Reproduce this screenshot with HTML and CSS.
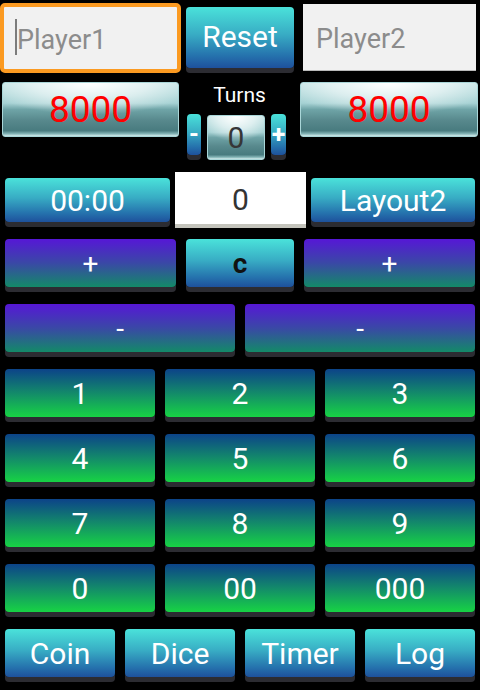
FILE: index.html
```html
<!DOCTYPE html>
<html>
<head>
<meta charset="utf-8">
<link rel="stylesheet" href="styles.css">
</head>
<body>
<div class="app">
  <div class="row1">
    <div class="field focused"><span class="caret"></span><span class="ph">Player1</span></div>
    <div class="btn teal reset">Reset</div>
    <div class="field p2"><span class="ph">Player2</span></div>
  </div>
  <div class="row2">
    <div class="score left">8000</div>
    <div class="center">
      <div class="turns">Turns</div>
      <div class="controls">
        <div class="btn teal mini">-</div>
        <div class="counter">0</div>
        <div class="btn teal mini plus">+</div>
      </div>
    </div>
    <div class="score right">8000</div>
  </div>
  <div class="row3">
    <div class="btn teal timebtn">00:00</div>
    <div class="entry">0</div>
    <div class="btn teal layoutbtn">Layout2</div>
  </div>
  <div class="grid row-ops">
    <div class="btn purple op">+</div>
    <div class="btn teal clear">c</div>
    <div class="btn purple op">+</div>
  </div>
  <div class="grid row-minus">
    <div class="btn purple sign">-</div>
    <div class="btn purple sign">-</div>
  </div>
  <div class="grid row-num">
    <div class="btn green">1</div>
    <div class="btn green">2</div>
    <div class="btn green">3</div>
  </div>
  <div class="grid row-num">
    <div class="btn green">4</div>
    <div class="btn green">5</div>
    <div class="btn green">6</div>
  </div>
  <div class="grid row-num">
    <div class="btn green">7</div>
    <div class="btn green">8</div>
    <div class="btn green">9</div>
  </div>
  <div class="grid row-num">
    <div class="btn green">0</div>
    <div class="btn green">00</div>
    <div class="btn green">000</div>
  </div>
  <div class="grid row-tools">
    <div class="btn teal">Coin</div>
    <div class="btn teal">Dice</div>
    <div class="btn teal">Timer</div>
    <div class="btn teal">Log</div>
  </div>
</div>
</body>
</html>
```

FILE: styles.css
```css
html, body {
  margin: 0;
  padding: 0;
  background: #000;
}
body {
  width: 480px;
  height: 690px;
  overflow: hidden;
  font-family: Roboto, "Noto Sans", "Liberation Sans", sans-serif;
  color: #fff;
}
.app {
  display: flex;
  flex-direction: column;
}

/* generic button */
.btn {
  display: flex;
  align-items: center;
  justify-content: center;
  border-radius: 4px;
  box-shadow: 0 5px 0 #2c2c32;
  color: #fff;
  font-size: 30px;
  box-sizing: border-box;
}
.teal {
  background: linear-gradient(to bottom, #4ae2da 0%, #38acc4 45%, #2572ad 80%, #1e519c 100%);
}
.purple {
  background: linear-gradient(to bottom, #5617d6 0%, #3a48a6 50%, #138a68 100%);
}
.green {
  background: linear-gradient(to bottom, #0c4389 0%, #138a6a 50%, #17d344 100%);
}

/* row 1 */
.row1 {
  display: flex;
  align-items: flex-start;
  height: 70px;
  margin-top: 3px;
}
.field {
  position: relative;
  display: flex;
  align-items: center;
  box-sizing: border-box;
  background: #f1f1f1;
  padding-left: 13px;
}
.field.focused {
  width: 181px;
  height: 70px;
  border: 4px solid #fb9a21;
  border-radius: 5px;
  padding-top: 3px;
}
.field.p2 {
  margin-left: 9px;
  width: 173px;
  height: 67px;
  margin-top: 1px;
  border-bottom: 1px solid #b9b9b9;
  padding-top: 4px;
}
.ph {
  font-size: 27px;
  color: #8c8c8c;
}
.caret {
  position: absolute;
  left: 11px;
  top: 12px;
  width: 2px;
  height: 36px;
  background: #7c7c7c;
}
.reset {
  margin-left: 5px;
  margin-top: 4px;
  width: 108px;
  height: 61px;
  padding-bottom: 2px;
}

/* row 2 */
.row2 {
  display: flex;
  align-items: flex-start;
  margin-top: 9px;
  height: 78px;
}
.score, .counter {
  display: flex;
  align-items: center;
  justify-content: center;
  box-sizing: border-box;
  border: 1px solid #a9d6d8;
  border-radius: 3px;
  background:
    radial-gradient(ellipse 62% 60% at 50% 0%, rgba(255,255,255,1) 0%, rgba(255,255,255,0.55) 55%, rgba(255,255,255,0) 100%),
    linear-gradient(to bottom, #bfe2e3 0%, #a6d2d4 38%, #6fa4a7 50%, #58898d 70%, #487b7f 90%, #86b6b8 96%, #d2ebeb 100%);
}
.score {
  height: 55px;
  color: #ff0000;
  font-size: 37px;
}
.score.left {
  margin-left: 2px;
  width: 177px;
}
.score.right {
  width: 178px;
}
.center {
  width: 121px;
  display: flex;
  flex-direction: column;
}
.turns {
  margin-top: 3px;
  height: 20px;
  line-height: 20px;
  font-size: 21px;
  text-align: center;
  color: #fff;
}
.controls {
  display: flex;
  align-items: flex-start;
  margin-top: 9px;
  margin-left: 8px;
}
.mini {
  width: 14px;
  height: 41px;
  font-size: 25px;
  font-weight: bold;
  border-radius: 4px;
}
.mini.plus {
  width: 15px;
  margin-left: 6px;
}
.counter {
  margin-left: 6px;
  margin-top: 1px;
  width: 58px;
  height: 45px;
  font-size: 30px;
  color: #363636;
}

/* row 3 */
.row3 {
  display: flex;
  align-items: center;
  height: 56px;
  margin-top: 12px;
  padding-left: 5px;
}
.timebtn {
  width: 165px;
  height: 44px;
}
.entry {
  margin-left: 5px;
  width: 131px;
  height: 56px;
  box-sizing: border-box;
  background: #fff;
  border-bottom: 4px solid #c4c4bc;
  display: flex;
  align-items: center;
  justify-content: center;
  font-size: 30px;
  color: #333;
  padding-top: 2px;
}
.layoutbtn {
  margin-left: 5px;
  width: 164px;
  height: 44px;
}

/* button grids */
.grid {
  display: grid;
  column-gap: 10px;
  padding: 0 5px;
  height: 48px;
  margin-top: 17px;
}
.grid .btn {
  height: 48px;
}
.row-ops {
  margin-top: 11px;
  grid-template-columns: 171px 108px 171px;
}
.row-minus {
  grid-template-columns: 230px 230px;
}
.row-num {
  grid-template-columns: 150px 150px 150px;
}
.row-tools {
  grid-template-columns: 110px 110px 110px 110px;
}
.op {
  font-size: 28px;
}
.clear {
  font-size: 28px;
  font-weight: bold;
  color: #111;
}
.sign {
  font-size: 28px;
}
```
